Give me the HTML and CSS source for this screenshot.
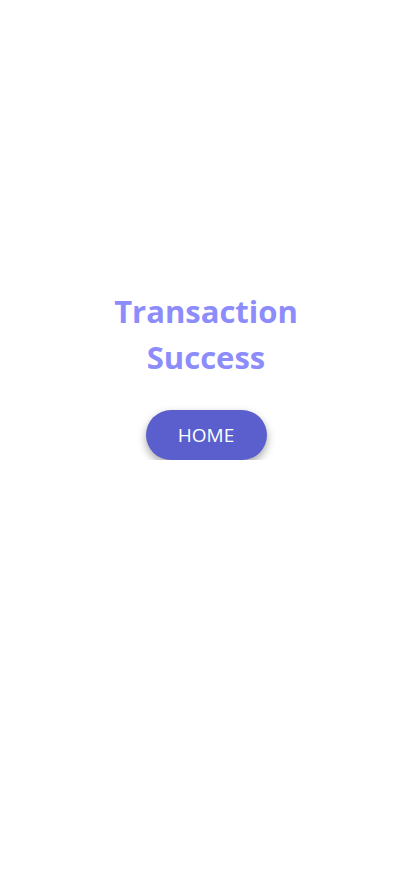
FILE: index.html
```html
<!DOCTYPE html>
<html>
<head>
<meta charset="utf-8">
<link rel="stylesheet" href="styles.css">
</head>
<body>
<main class="page">
  <h1 class="title">Transaction<br>Success</h1>
  <button class="home-btn">HOME</button>
</main>
</body>
</html>
```
FILE: styles.css
```css
html, body {
  margin: 0;
  padding: 0;
  background: #fff;
}
.page {
  display: flex;
  flex-direction: column;
  align-items: center;
  padding-top: 288px;
  font-family: "Open Sans", "Noto Sans", sans-serif;
}
.title {
  margin: 0;
  font-size: 31px;
  line-height: 46px;
  font-weight: 700;
  color: #8c8cfb;
  text-align: center;
}
.home-btn {
  margin-top: 30px;
  width: 121px;
  height: 50px;
  border: none;
  border-radius: 25px;
  background: #5a5fcd;
  color: #fff;
  font-family: "Open Sans", "Noto Sans", sans-serif;
  font-size: 19px;
  box-shadow: 0 4px 8px rgba(0,0,0,0.35);
  padding: 0;
}
```
